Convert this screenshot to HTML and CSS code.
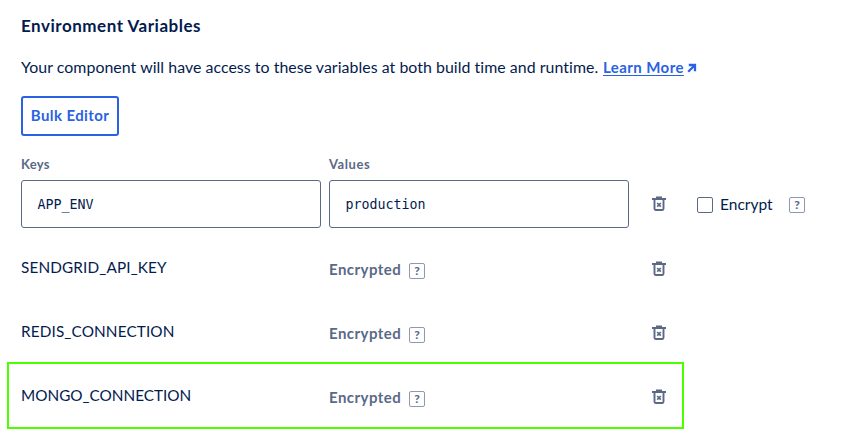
FILE: index.html
```
<!DOCTYPE html>
<html lang="en">
<head>
<meta charset="utf-8">
<title>Environment Variables</title>
<link rel="stylesheet" href="styles.css">
</head>
<body>
<svg width="0" height="0" class="defs">
<symbol id="trash" viewBox="0 0 14 16"><path d="M0 3H14M4 1.5H10" fill="none" stroke="currentColor" stroke-width="1.9"/><path d="M2.5 3.5V12.8Q2.5 14 3.7 14H10.3Q11.5 14 11.5 12.8V3.5" fill="none" stroke="currentColor" stroke-width="1.9"/><path d="M5.2 7L8.8 10.6M8.8 7L5.2 10.6" stroke="currentColor" stroke-width="1.7"/></symbol>
</svg>
<main class="panel">
<h1 class="title">Environment Variables</h1>
<p class="intro"><span class="copy">Your component will have access to these variables at both build time and runtime.</span><a class="link" href="#">Learn More</a><svg class="arrow" viewBox="0 0 10 10"><path d="M1.2 8.8L7.5 2.5M1.8 2H8V8.2" fill="none" stroke="currentColor" stroke-width="2.3"/></svg></p>
<button class="bulk">Bulk Editor</button>
<div class="labels"><span>Keys</span><span class="values">Values</span></div>
<div class="fields">
<div class="input">APP_ENV</div><div class="input">production</div>
<svg class="trash"><use href="#trash"/></svg>
<label class="encrypt"><i class="check"></i><span class="enc-label">Encrypt</span><b class="help">?</b></label>
</div>
<div class="rows">
<div class="row"><span class="key">SENDGRID_API_KEY</span><span class="state">Encrypted</span><b class="help">?</b><svg class="trash"><use href="#trash"/></svg></div>
<div class="row"><span class="key">REDIS_CONNECTION</span><span class="state">Encrypted</span><b class="help">?</b><svg class="trash"><use href="#trash"/></svg></div>
<div class="row marked"><span class="key">MONGO_CONNECTION</span><span class="state">Encrypted</span><b class="help">?</b><svg class="trash"><use href="#trash"/></svg></div>
</div>
</main>
</body>
</html>
```
FILE: styles.css
```
* { box-sizing: border-box; }
body { margin: 0; background: #fff; color: #031b4e; font: 15px/20px Lato, sans-serif; font-variant-ligatures: none; overflow: hidden; }
.defs { display: block; }
.panel { height: 433px; padding: 16px 21px 0; }
.title { margin: 0; font-size: 17px; line-height: 20px; font-weight: 700; letter-spacing: .52px; }
.intro { display: flex; align-items: center; margin: 21px 0 0; height: 20px; white-space: nowrap; }
.copy { width: 582px; font-size: 15.9px; letter-spacing: .045px; }
.link { width: 82px; color: #2b62e3; font-weight: 700; letter-spacing: .42px; text-underline-offset: 2px; }
.arrow { width: 10px; height: 10px; margin: 2px 0 0 2px; color: #2b62e3; }
.bulk { display: block; width: 98px; height: 40px; margin-top: 19px; padding: 0 0 2px; border: 2px solid #2b62e3; border-radius: 3px; background: #fff; color: #2b62e3; font: 700 15px/20px Lato, sans-serif; letter-spacing: .4px; }
.labels { display: flex; margin-top: 18px; height: 20px; color: #5b6987; font-size: 13px; font-weight: 700; letter-spacing: .3px; }
.labels span { width: 308px; }
.labels .values { letter-spacing: .55px; }
.fields { display: flex; align-items: center; height: 48px; margin-top: 6px; }
.input { width: 300px; height: 48px; margin-right: 8px; padding: 1px 15.5px 0; border: 1px solid #5b6987; border-radius: 3px; font: 13.3px/46px "DejaVu Sans Mono", monospace; }
.trash { width: 14px; height: 16px; margin-left: 15px; color: #5b6987; }
.encrypt { display: flex; align-items: center; margin: 2px 0 0 31px; }
.check { width: 16px; height: 16px; border: 1px solid #5b6987; border-radius: 2px; }
.enc-label { width: 69px; margin: -2px 0 0 7px; font-size: 15.5px; }
.help { width: 16px; height: 16px; border: 1px solid #8f98b0; border-radius: 2px; color: #5b6987; font-size: 12px; line-height: 14px; font-weight: 900; text-align: center; }
.rows { margin-top: 8px; }
.row { display: flex; align-items: center; height: 64px; }
.key { width: 308px; margin-top: -2px; font-size: 15.3px; letter-spacing: .14px; }
.state { width: 80px; margin-top: 2px; color: #5b6987; font-weight: 700; letter-spacing: .45px; }
.row .help { margin-top: 6px; }
.row .trash { margin: 2px 0 0 227px; }
.marked { width: 677px; height: 67px; margin: -2px 0 0 -14px; padding-left: 12px; border: 2px solid #4bff00; }
.marked .key { letter-spacing: 0; }
```
